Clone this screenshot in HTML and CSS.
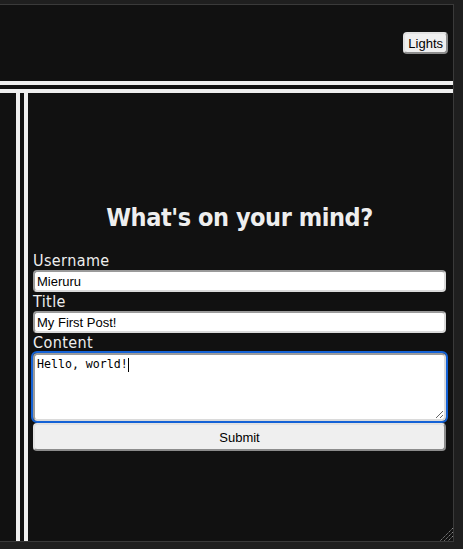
FILE: index.html
```html
<!DOCTYPE html>
<html lang="en">
<head>
<meta charset="utf-8">
<title>Post</title>
<link rel="stylesheet" href="styles.css">
</head>
<body>
<div class="frame">
  <header class="topbar">
    <button class="btn lights" type="button">Lights</button>
  </header>
  <div class="main">
    <aside class="side"></aside>
    <section class="content">
      <h1 class="title">What's on your mind?</h1>
      <form class="post">
        <label class="lbl" for="username">Username</label>
        <input class="field" id="username" type="text" value="Mieruru">
        <label class="lbl" for="title">Title</label>
        <input class="field" id="title" type="text" value="My First Post!">
        <label class="lbl" for="content">Content</label>
        <div class="area-wrap">
          <textarea class="area" id="content">Hello, world!</textarea>
          <span class="caret"></span>
        </div>
        <button class="btn submit" type="button">Submit</button>
      </form>
    </section>
  </div>
  <svg class="grip" width="13" height="13" viewBox="0 0 13 13">
    <line x1="13" y1="0" x2="0" y2="13" stroke="#8a8a8a" stroke-width="1" stroke-dasharray="1.4 0.8"/>
    <line x1="13" y1="4" x2="4" y2="13" stroke="#8a8a8a" stroke-width="1" stroke-dasharray="1.4 0.8"/>
    <line x1="13" y1="8" x2="8" y2="13" stroke="#8a8a8a" stroke-width="1" stroke-dasharray="1.4 0.8"/>
  </svg>
</div>
</body>
</html>
```
FILE: styles.css
```css
html, body {
  margin: 0;
  padding: 0;
}

body {
  background: #1f1f1f;
  font-family: "DejaVu Sans", sans-serif;
  height: 549px;
  overflow: hidden;
}

.frame {
  position: relative;
  margin-top: 4px;
  width: 453px;
  height: 536px;
  background: #111111;
  border: 1px solid #3a3a3a;
  border-left: 0;
  display: flex;
  flex-direction: column;
  overflow: hidden;
}

.topbar {
  height: 76px;
  flex: none;
  border-bottom: 12px double #efefef;
  display: flex;
  justify-content: flex-end;
  align-items: center;
  padding-right: 5px;
}

.btn {
  font-family: "Liberation Sans", Arial, sans-serif;
  font-size: 13px;
  color: #000;
  background: #efefef;
  border-style: solid;
  border-width: 2px;
  border-color: #e2e2e2 #8c8c8c #8c8c8c #e2e2e2;
  border-radius: 4px;
  margin: 0;
}

.lights {
  height: 22px;
  padding: 0 3px;
}

.main {
  flex: 1;
  display: flex;
  min-height: 0;
}

.side {
  width: 16px;
  flex: none;
  border-right: 12px double #efefef;
}

.content {
  flex: 1;
  padding: 0 7px 0 5px;
  color: #eeeeee;
}

.title {
  font-family: "DejaVu Sans Condensed", "DejaVu Sans", sans-serif;
  font-stretch: condensed;
  font-weight: bold;
  font-size: 25px;
  line-height: normal;
  letter-spacing: -0.45px;
  text-align: center;
  margin: 110px 0 19px;
}

.post {
  display: flex;
  flex-direction: column;
}

.lbl {
  font-family: "DejaVu Sans Condensed", "DejaVu Sans", sans-serif;
  font-stretch: condensed;
  font-size: 16px;
  line-height: normal;
  letter-spacing: 0.4px;
  display: block;
}

.field {
  box-sizing: border-box;
  height: 22px;
  margin: 0;
  padding: 0 2px;
  font-family: "Liberation Sans", Arial, sans-serif;
  font-size: 13px;
  color: #000;
  background: #fff;
  border-style: solid;
  border-width: 2px;
  border-color: #9a9a9a #dadada #dadada #9a9a9a;
  border-radius: 4px;
  outline: none;
}

.area-wrap {
  position: relative;
  margin: 1px 0 2px;
}

.area {
  box-sizing: border-box;
  display: block;
  width: 100%;
  height: 68px;
  margin: 0;
  padding: 2px;
  font-family: "DejaVu Sans Mono", "Liberation Mono", monospace;
  font-size: 11.6px;
  line-height: 14px;
  color: #000;
  background: #fff;
  border-style: solid;
  border-width: 2px;
  border-color: #9a9a9a #dadada #dadada #9a9a9a;
  border-radius: 4px;
  outline: 2px solid #1462d6;
  outline-offset: 0;
}

.caret {
  position: absolute;
  left: 95px;
  top: 5px;
  width: 1px;
  height: 14px;
  background: #000;
}

.submit {
  height: 28px;
  padding: 0;
}

.grip {
  position: absolute;
  right: 0;
  bottom: 0;
}
```
